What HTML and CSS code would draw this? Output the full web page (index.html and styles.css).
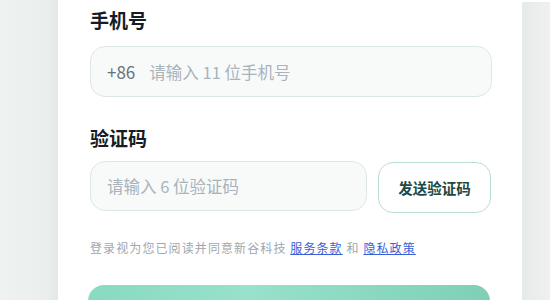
FILE: index.html
```html
<!DOCTYPE html>
<html lang="zh-CN">
<head>
<meta charset="utf-8">
<link rel="stylesheet" href="styles.css">
</head>
<body>
<div class="page">
  <div class="side-left"></div>
  <main class="card">
    <label class="label">手机号</label>
    <div class="field">
      <span class="prefix">+86</span>
      <span class="placeholder">请输入 11 位手机号</span>
    </div>
    <label class="label label-code">验证码</label>
    <div class="code-row">
      <div class="field field-code">
        <span class="placeholder">请输入 6 位验证码</span>
      </div>
      <button class="send">发送验证码</button>
    </div>
    <p class="agree">登录视为您已阅读并同意新谷科技 <a href="#">服务条款</a> 和 <a href="#">隐私政策</a></p>
    <div class="submit"></div>
  </main>
  <div class="side-right"></div>
</div>
</body>
</html>
```
FILE: styles.css
```css
* { box-sizing: border-box; }
html, body { margin: 0; height: 100%; }
body {
  font-family: "Noto Sans CJK SC", "Noto Sans", sans-serif;
  background: #ffffff;
  overflow: hidden;
}
.page {
  display: flex;
  width: 550px;
  height: 300px;
}
.side-left {
  width: 58px;
  flex: none;
  background: linear-gradient(90deg, #eef2f1 0%, #eaefee 80%, #e3e8e7 100%);
}
.side-right {
  width: 28px;
  flex: none;
  margin-top: 2px;
  background: linear-gradient(90deg, #e6eae9 0%, #eef1f0 100%);
}
.card {
  flex: 1;
  background: #fff;
  padding: 7px 0 0 32px;
  display: flex;
  flex-direction: column;
  overflow: hidden;
}
.card > * { flex-shrink: 0; }
.label {
  font-size: 19px;
  font-weight: 700;
  line-height: 26px;
  color: #151c26;
  height: 26px;
}
.field {
  margin-top: 13px;
  width: 402px;
  height: 51px;
  border: 1px solid #dde7e5;
  border-radius: 15px;
  background: #f8fafa;
  display: flex;
  align-items: center;
  padding-left: 16px;
  font-size: 16.5px;
}
.prefix {
  color: #68727c;
  margin-right: 14px;
  font-size: 17px;
}
.placeholder {
  color: #a9b3ba;
}
.label-code {
  margin-top: 28px;
}
.code-row {
  display: flex;
  gap: 11px;
  margin-top: 10px;
  align-items: flex-start;
}
.field-code {
  margin-top: 0;
  width: 277px;
  height: 50px;
}
.send {
  margin-top: 1px;
  width: 113px;
  height: 51px;
  border: 1px solid #b9dfd2;
  border-radius: 15px;
  background: #fff;
  font-family: inherit;
  font-size: 14.5px;
  font-weight: 700;
  color: #1e4843;
  padding: 0;
}
.agree {
  margin: 26px 0 0 0;
  font-size: 12px;
  letter-spacing: 1.1px;
  line-height: 18px;
  color: #9ea7ae;
}
.agree a {
  color: #3a5ed6;
  text-decoration: underline;
}
.submit {
  margin-top: 28px;
  margin-left: -2px;
  width: 402px;
  height: 50px;
  border-radius: 16px;
  background: linear-gradient(90deg, #8ad9c1 0%, #98e1cc 40%, #7fcfb6 100%);
}
```
